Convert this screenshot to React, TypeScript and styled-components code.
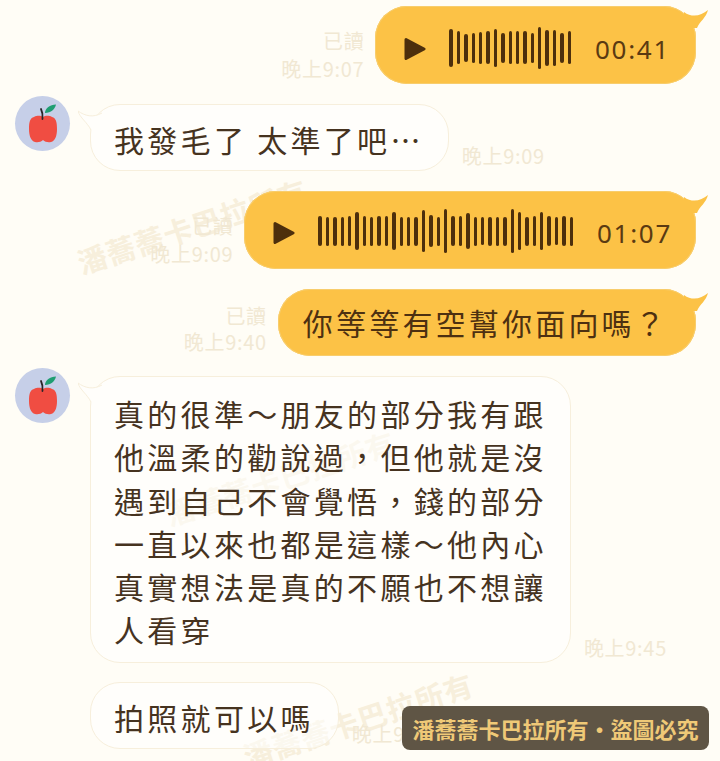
import React from 'react';
import styled, { createGlobalStyle } from 'styled-components';

const GlobalStyle = createGlobalStyle`
  html, body {
    margin: 0;
    padding: 0;
    background: #fffdf6;
  }
`;

const cjk = `"Noto Sans CJK TC", "Noto Sans CJK SC", "Liberation Sans", sans-serif`;

const Page = styled.div`
  position: relative;
  width: 720px;
  height: 761px;
  overflow: hidden;
  box-sizing: border-box;
  padding-top: 6px;
  background: #fffdf6;
  font-family: ${cjk};
  display: flex;
  flex-direction: column;
  gap: 20px;
`;

const Watermark = styled.div<{ $top: number; $left: number }>`
  position: absolute;
  top: ${({ $top }) => $top}px;
  left: ${({ $left }) => $left}px;
  transform: rotate(-18deg);
  font-size: 29px;
  font-weight: 700;
  letter-spacing: 1px;
  white-space: nowrap;
  color: #f7efdc;
  z-index: 0;
`;

const Row = styled.div<{ $out?: boolean; $indent?: boolean }>`
  position: relative;
  z-index: 1;
  display: flex;
  align-items: flex-end;
  justify-content: ${({ $out }) => ($out ? 'flex-end' : 'flex-start')};
  gap: ${({ $out }) => ($out ? 11 : 13)}px;
  padding-left: ${({ $indent }) => ($indent ? 90 : 15)}px;
  padding-right: ${({ $out }) => ($out ? 24 : 0)}px;
  margin-top: ${({ $indent }) => ($indent ? -1 : 0)}px;
`;

const Avatar = styled.div`
  flex: none;
  align-self: flex-start;
  width: 55px;
  height: 55px;
  margin: -8px 7px 0 0;
  border-radius: 50%;
  background: #c6cfe8;
  display: flex;
  align-items: center;
  justify-content: center;
`;

const OutBubble = styled.div`
  position: relative;
  box-sizing: border-box;
  background: #fcc246;
  box-shadow: inset 0 0 0 1px #f8cd6c;
  border-radius: 32px;
  color: #53350f;
`;

const AudioBubble = styled(OutBubble)<{ $lift: number; $end: number }>`
  height: 78px;
  display: flex;
  align-items: center;
  padding: ${({ $lift }) => $lift}px ${({ $end }) => $end}px 0 29px;
  gap: 23px;

  & > svg:nth-of-type(2),
  & > span {
    margin-top: 3px;
  }

  & > span {
    margin-left: 1px;
  }
`;

const TextOutBubble = styled(OutBubble)`
  height: 67px;
  padding: 0 28px 0 25px;
  display: flex;
  align-items: center;
  font-size: 30px;
  letter-spacing: 3.2px;
  line-height: 43px;
  color: #4d3011;
`;

const InBubble = styled.div<{ $top?: number; $right?: number; $bottom?: number }>`
  position: relative;
  box-sizing: border-box;
  background: rgba(255, 255, 255, 0.55);
  border: 1px solid #f7efdc;
  border-radius: 30px;
  padding: ${({ $top }) => $top ?? 13}px ${({ $right }) => $right ?? 24}px ${({ $bottom }) => $bottom ?? 9}px 23px;
  font-size: 30px;
  letter-spacing: 3.3px;
  line-height: 43.2px;
  color: #46331f;
  white-space: nowrap;
`;

const Line = styled.div`
  display: block;
`;

const Meta = styled.div<{ $lh?: number }>`
  font-size: 20px;
  line-height: ${({ $lh }) => $lh ?? 28}px;
  letter-spacing: 0.7px;
  text-align: right;
  color: #f1e8d3;
  white-space: nowrap;
  margin: 0 0 1px 0;
`;

const Duration = styled.span`
  font-family: "Noto Sans", Roboto, sans-serif;
  font-size: 26px;
  letter-spacing: 1.7px;
  color: #5a3a12;
`;

const Wave = styled.div`
  display: flex;
  align-items: center;
  gap: 4px;
`;

const Bar = styled.i<{ $h: number }>`
  display: block;
  width: 3.4px;
  height: ${({ $h }) => $h}px;
  border-radius: 2px;
  background: #4d2f0c;
`;

const Badge = styled.div`
  position: absolute;
  z-index: 2;
  left: 402px;
  top: 706px;
  width: 307px;
  height: 44px;
  border-radius: 8px;
  background: #5f5545;
  color: #efc977;
  font-size: 22px;
  font-weight: 700;
  display: flex;
  align-items: center;
  justify-content: center;
  white-space: nowrap;
`;

const TailSvg = styled.svg<{ $out?: boolean }>`
  position: absolute;
  top: ${({ $out }) => ($out ? 4 : 5)}px;
  ${({ $out }) => ($out ? 'right: -12px;' : 'left: -13px;')}
  width: 24px;
  height: 24px;
`;

const OutTail = () => (
  <TailSvg $out viewBox="0 0 24 24">
    <path d="M0 2 C8 8 17 6 24 0 C22 8 16 11 13 18 L0 18 Z" fill="#fcc246" />
  </TailSvg>
);

const InTail = () => (
  <TailSvg viewBox="0 0 24 24">
    <path d="M24 3 C15 8 7 6 0 1 C2 8 9 12 13 20 L24 20 Z" fill="#fffefb" />
    <path d="M24 3 C15 8 7 6 0 1 C2 8 9 12 13 20" fill="none" stroke="#f7efdc" strokeWidth="1" />
  </TailSvg>
);

const Play = () => (
  <svg width="22" height="24" viewBox="0 0 22 24" style={{ flex: 'none' }}>
    <path d="M2 2.5 L20 12 L2 21.5 Z" fill="#4d2f0c" stroke="#4d2f0c" strokeWidth="3" strokeLinejoin="round" />
  </svg>
);

const Apple = () => (
  <svg width="32" height="40" viewBox="0 0 32 40">
    <path
      d="M7 13 C11 11 14 12 16 13 C18 12 21 11 25 13 C29 14 30 18 30 25 C30 32 28 37 24 38 C21 38.5 18 38 16 36 C14 38 11 38.5 8 38 C4 37 2 32 2 25 C2 18 3 14 7 13 Z"
      fill="#f04d42"
    />
    <path d="M14 5 C15.5 8 16 10 15.5 15" fill="none" stroke="#2a2428" strokeWidth="1.8" strokeLinecap="round" />
    <path d="M18 9 C18 4 23 1 29 0.5 C28 5 24 9 18 9 Z" fill="#1f9e72" />
  </svg>
);

const firstWave = [38, 33, 28, 30, 32, 33, 38, 30, 33, 33, 33, 30, 42, 36, 36, 30, 33];
const secondWave = [
  30, 29, 29, 29, 30, 38, 30, 29, 30, 30, 38, 29, 29, 29, 42, 32, 29, 44, 30, 30,
  36, 29, 28, 29, 29, 29, 44, 38, 29, 30, 38, 30, 28, 30, 29,
];

const bodyLines = [
  '真的很準～朋友的部分我有跟',
  '他溫柔的勸說過，但他就是沒',
  '遇到自己不會覺悟，錢的部分',
  '一直以來也都是這樣～他內心',
  '真實想法是真的不願也不想讓',
  '人看穿',
];

const AudioMessage: React.FC<{ bars: number[]; time: string; lift: number; end: number }> = ({ bars, time, lift, end }) => (
  <AudioBubble $lift={lift} $end={end}>
    <OutTail />
    <Play />
    <Wave>
      {bars.map((h, i) => (
        <Bar key={i} $h={h} />
      ))}
    </Wave>
    <Duration>{time}</Duration>
  </AudioBubble>
);

const App: React.FC = () => (
  <Page>
    <GlobalStyle />
    <Watermark $top={204} $left={72}>潘蕎蕎卡巴拉所有</Watermark>
    <Watermark $top={456} $left={160}>潘蕎蕎卡巴拉所有</Watermark>
    <Watermark $top={698} $left={238}>潘蕎蕎卡巴拉所有</Watermark>

    <Row $out>
      <Meta>已讀<br />晚上9:07</Meta>
      <AudioMessage bars={firstWave} time="00:41" lift={5} end={26} />
    </Row>

    <Row>
      <Avatar><Apple /></Avatar>
      <InBubble>
        <InTail />
        我發毛了 太準了吧⋯
      </InBubble>
      <Meta>晚上9:09</Meta>
    </Row>

    <Row $out>
      <Meta>已讀<br />晚上9:09</Meta>
      <AudioMessage bars={secondWave} time="01:07" lift={2} end={24} />
    </Row>

    <Row $out>
      <Meta $lh={26}>已讀<br />晚上9:40</Meta>
      <TextOutBubble>
        <OutTail />
        你等等有空幫你面向嗎？
      </TextOutBubble>
    </Row>

    <Row>
      <Avatar><Apple /></Avatar>
      <InBubble $top={15} $right={23} $bottom={10.8}>
        <InTail />
        {bodyLines.map((line) => (
          <Line key={line}>{line}</Line>
        ))}
      </InBubble>
      <Meta>晚上9:45</Meta>
    </Row>

    <Row $indent>
      <InBubble>拍照就可以嗎</InBubble>
      <Meta>晚上9:46</Meta>
    </Row>

    <Badge>潘蕎蕎卡巴拉所有・盜圖必究</Badge>
  </Page>
);

export default App;
